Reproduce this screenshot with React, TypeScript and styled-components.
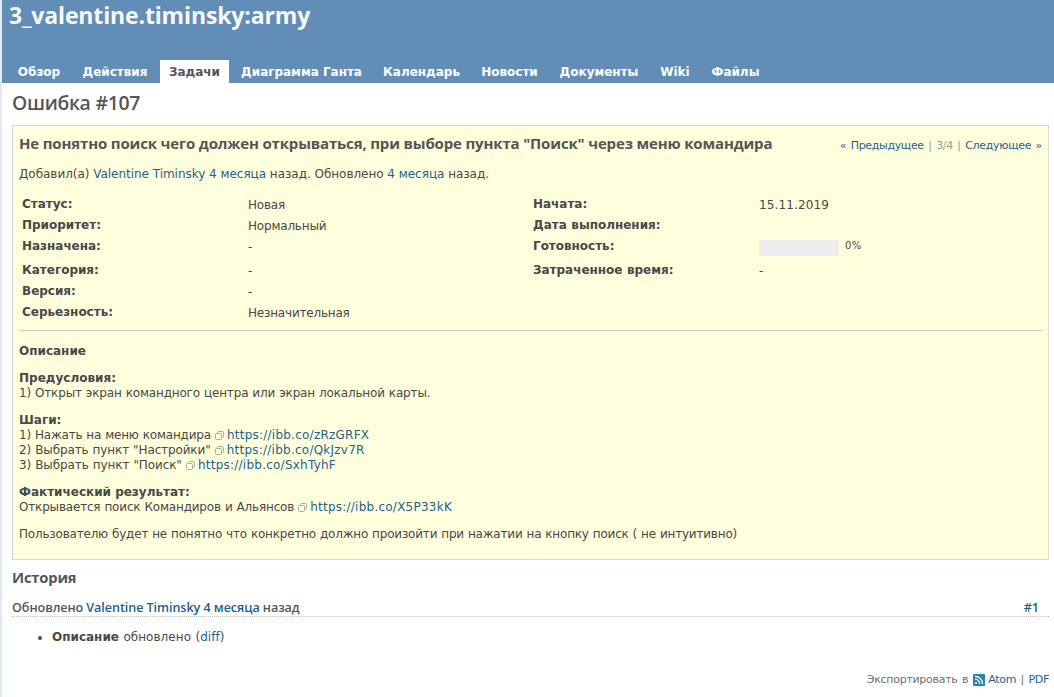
import React from "react";
import styled, { createGlobalStyle } from "styled-components";

const body = '"DejaVu Sans", Verdana, sans-serif';
const heading = '"Open Sans", "Trebuchet MS", sans-serif';

const Global = createGlobalStyle`
  * { box-sizing: border-box; }
  body { margin: 0; background: #fff; color: #484848; font: 12px/15px ${body}; letter-spacing: -0.2px; word-spacing: 0.4px; }
  p, h1, h2, h3, h4, ul { margin: 0; padding: 0; }
  b { letter-spacing: 0; word-spacing: 0; }
`;

const Page = styled.div`
  height: 697px;
  border-left: 2px solid #e0e9f4;
  overflow: hidden;
`;
const Header = styled.header`
  height: 83px;
  padding-left: 6px;
  background: #628db6;
  display: flex;
  flex-direction: column;
  justify-content: space-between;
`;
const Project = styled.h1`
  padding-left: 1px;
  font: 700 23px/30px ${heading};
  letter-spacing: -0.14px;
  color: #f8f8f8;
  white-space: nowrap;
`;
const Tabs = styled.nav`
  display: flex;
  gap: 2px;
`;
const Tab = styled.a<{ $active?: boolean; $width: number }>`
  width: ${(p) => p.$width}px;
  height: 23px;
  line-height: 25px;
  text-align: center;
  white-space: nowrap;
  font-weight: bold;
  letter-spacing: -0.02px;
  word-spacing: 0;
  color: ${(p) => (p.$active ? "#555" : "#fff")};
  background: ${(p) => (p.$active ? "#fff" : "transparent")};
`;
const Main = styled.main`
  padding: 0 5px 0 10px;
`;
const PageTitle = styled.h2`
  height: 42px;
  font: 600 19.4px/40px ${heading};
  letter-spacing: -0.33px;
  color: #555;
`;
const Issue = styled.section`
  height: 435px;
  padding: 8px 6px 0;
  border: 1px solid #d7d7d7;
  background: #ffffdd;
`;
const Subject = styled.div`
  display: flex;
  justify-content: space-between;
  height: 20px;
`;
const SubjectText = styled.h3`
  font: 700 15px/18px ${heading};
  letter-spacing: -0.16px;
  word-spacing: 0;
  color: #555;
  white-space: nowrap;
`;
const Pager = styled.div`
  font-size: 11px;
  line-height: 23px;
  letter-spacing: -0.32px;
  word-spacing: 1.3px;
  color: #999;
  white-space: nowrap;
`;
const Link = styled.a`
  color: #1f5f8b;
  text-decoration: none;
`;
const Author = styled.p`
  margin-top: 13px;
  letter-spacing: -0.03px;
  word-spacing: 0;
`;
const Attributes = styled.dl`
  display: grid;
  grid-template-columns: 226px 285px 226px 1fr;
  grid-template-rows: 21px 21px 24px 21px 21px 21px;
  margin: 15px 0 0;
  padding: 0 0 0 3px;
`;
const Label = styled.dt`
  font-weight: bold;
  letter-spacing: -0.02px;
`;
const Value = styled.dd`
  margin: 0;
  padding-top: 1px;
  display: flex;
`;
const DateText = styled.span`
  letter-spacing: 0.13px;
`;
const Bar = styled.div`
  width: 80px;
  height: 16px;
  margin-right: 6px;
  background: #eee;
`;
const Percent = styled.span`
  font-size: 10px;
  line-height: 12px;
  letter-spacing: 0.4px;
`;
const Rule = styled.hr`
  height: 1px;
  margin: 4px 0 13px;
  border: 0;
  background: #ccc;
`;
const Para = styled.p`
  margin-bottom: 12px;
`;
const Step = styled.span<{ $tracking?: number }>`
  display: block;
  letter-spacing: ${(p) => p.$tracking ?? -0.2}px;
`;
const Url = styled(Link)`
  letter-spacing: 0.24px;
`;
const ExternalSvg = styled.svg`
  display: inline-block;
  width: 9px;
  height: 9px;
  margin: 0 3px 0 0;
  vertical-align: -1px;
`;
const HistoryTitle = styled.h3`
  margin-top: 7px;
  font: 700 14.7px/20px ${heading};
  letter-spacing: -0.15px;
  color: #555;
`;
const JournalHead = styled.h4`
  display: flex;
  justify-content: space-between;
  height: 19px;
  margin-top: 11px;
  padding-right: 10px;
  border-bottom: 1px dotted #bbb;
  font: 600 12.6px/20px ${heading};
  letter-spacing: -0.07px;
  word-spacing: 0;
  color: #555;
`;
const Changes = styled.ul`
  margin-top: 13px;
  padding-left: 40px;
  letter-spacing: 0.04px;
  word-spacing: 0.6px;
`;
const Export = styled.p`
  display: flex;
  justify-content: flex-end;
  align-items: center;
  margin-top: 27px;
  font-size: 11px;
  letter-spacing: -0.28px;
  word-spacing: 1.2px;
  color: #707070;
  white-space: pre;
`;
const FeedSvg = styled.svg`
  width: 12px;
  height: 12px;
  margin: 0 3px 0 5px;
`;

const tabs: [string, number][] = [
  ["Обзор", 62], ["Действия", 86], ["Задачи", 69], ["Диаграмма Ганта", 141], ["Календарь", 95],
  ["Новости", 77], ["Документы", 98], ["Wiki", 50], ["Файлы", 67],
];

const attributes: [string, string, string, React.ReactNode][] = [
  ["Статус:", "Новая", "Начата:", <DateText>15.11.2019</DateText>],
  ["Приоритет:", "Нормальный", "Дата выполнения:", ""],
  ["Назначена:", "-", "Готовность:", <><Bar /><Percent>0%</Percent></>],
  ["Категория:", "-", "Затраченное время:", "-"],
  ["Версия:", "-", "", ""],
  ["Серьезность:", "Незначительная", "", ""],
];

const External = ({ path }: { path: string }) => (
  <>
    <ExternalSvg viewBox="0 0 9 9" fill="none" stroke="#aeab9c">
      <path d="M2.5 2.5V1.5Q2.5.5 3.5.5H7.5Q8.5.5 8.5 1.5V5.5Q8.5 6.5 7.5 6.5H6.5" />
      <rect x=".5" y="2.5" width="6" height="6" rx="1" />
    </ExternalSvg>
    <Url>https://ibb.co/{path}</Url>
  </>
);

const Feed = () => (
  <FeedSvg viewBox="0 0 12 12">
    <rect width="12" height="12" rx="1" fill="#2c80b8" />
    <g fill="none" stroke="#fff" strokeWidth="1.3">
      <path d="M2 2.4A7.6 7.6 0 0 1 9.6 10M2 5.2A4.8 4.8 0 0 1 6.8 10" />
    </g>
    <circle cx="3" cy="9" r="1.1" fill="#fff" />
  </FeedSvg>
);

export default function App() {
  return (
    <Page>
      <Global />
      <Header>
        <Project>3_valentine.timinsky:army</Project>
        <Tabs>
          {tabs.map(([name, width]) => (
            <Tab key={name} $width={width} $active={name === "Задачи"}>{name}</Tab>
          ))}
        </Tabs>
      </Header>
      <Main>
        <PageTitle>Ошибка #107</PageTitle>
        <Issue>
          <Subject>
            <SubjectText>Не понятно поиск чего должен открываться, при выборе пункта "Поиск" через меню командира</SubjectText>
            <Pager><Link>« Предыдущее</Link> | 3/4 | <Link>Следующее »</Link></Pager>
          </Subject>
          <Author>
            Добавил(а) <Link>Valentine Timinsky</Link> <Link>4 месяца</Link> назад. Обновлено <Link>4 месяца</Link> назад.
          </Author>
          <Attributes>
            {attributes.map(([l1, v1, l2, v2]) => (
              <React.Fragment key={l1}>
                <Label>{l1}</Label><Value>{v1}</Value><Label>{l2}</Label><Value>{v2}</Value>
              </React.Fragment>
            ))}
          </Attributes>
          <Rule />
          <Para><b>Описание</b></Para>
          <Para>
            <b>Предусловия:</b>
            <Step $tracking={-0.17}>1) Открыт экран командного центра или экран локальной карты.</Step>
          </Para>
          <Para as="div">
            <b>Шаги:</b>
            <Step>1) Нажать на меню командира <External path="zRzGRFX" /></Step>
            <Step $tracking={-0.12}>2) Выбрать пункт "Настройки" <External path="QkJzv7R" /></Step>
            <Step $tracking={-0.1}>3) Выбрать пункт "Поиск" <External path="SxhTyhF" /></Step>
          </Para>
          <Para>
            <b>Фактический результат:</b>
            <Step $tracking={-0.18}>Открывается поиск Командиров и Альянсов <External path="X5P33kK" /></Step>
          </Para>
          <Para>Пользователю будет не понятно что конкретно должно произойти при нажатии на кнопку поиск ( не интуитивно)</Para>
        </Issue>
        <HistoryTitle>История</HistoryTitle>
        <JournalHead>
          <span>Обновлено <Link>Valentine Timinsky</Link> <Link>4 месяца</Link> назад</span>
          <Link>#1</Link>
        </JournalHead>
        <Changes>
          <li><b>Описание</b> обновлено (<Link>diff</Link>)</li>
        </Changes>
        <Export>Экспортировать в<Feed /><Link>Atom</Link> | <Link>PDF</Link></Export>
      </Main>
    </Page>
  );
}
